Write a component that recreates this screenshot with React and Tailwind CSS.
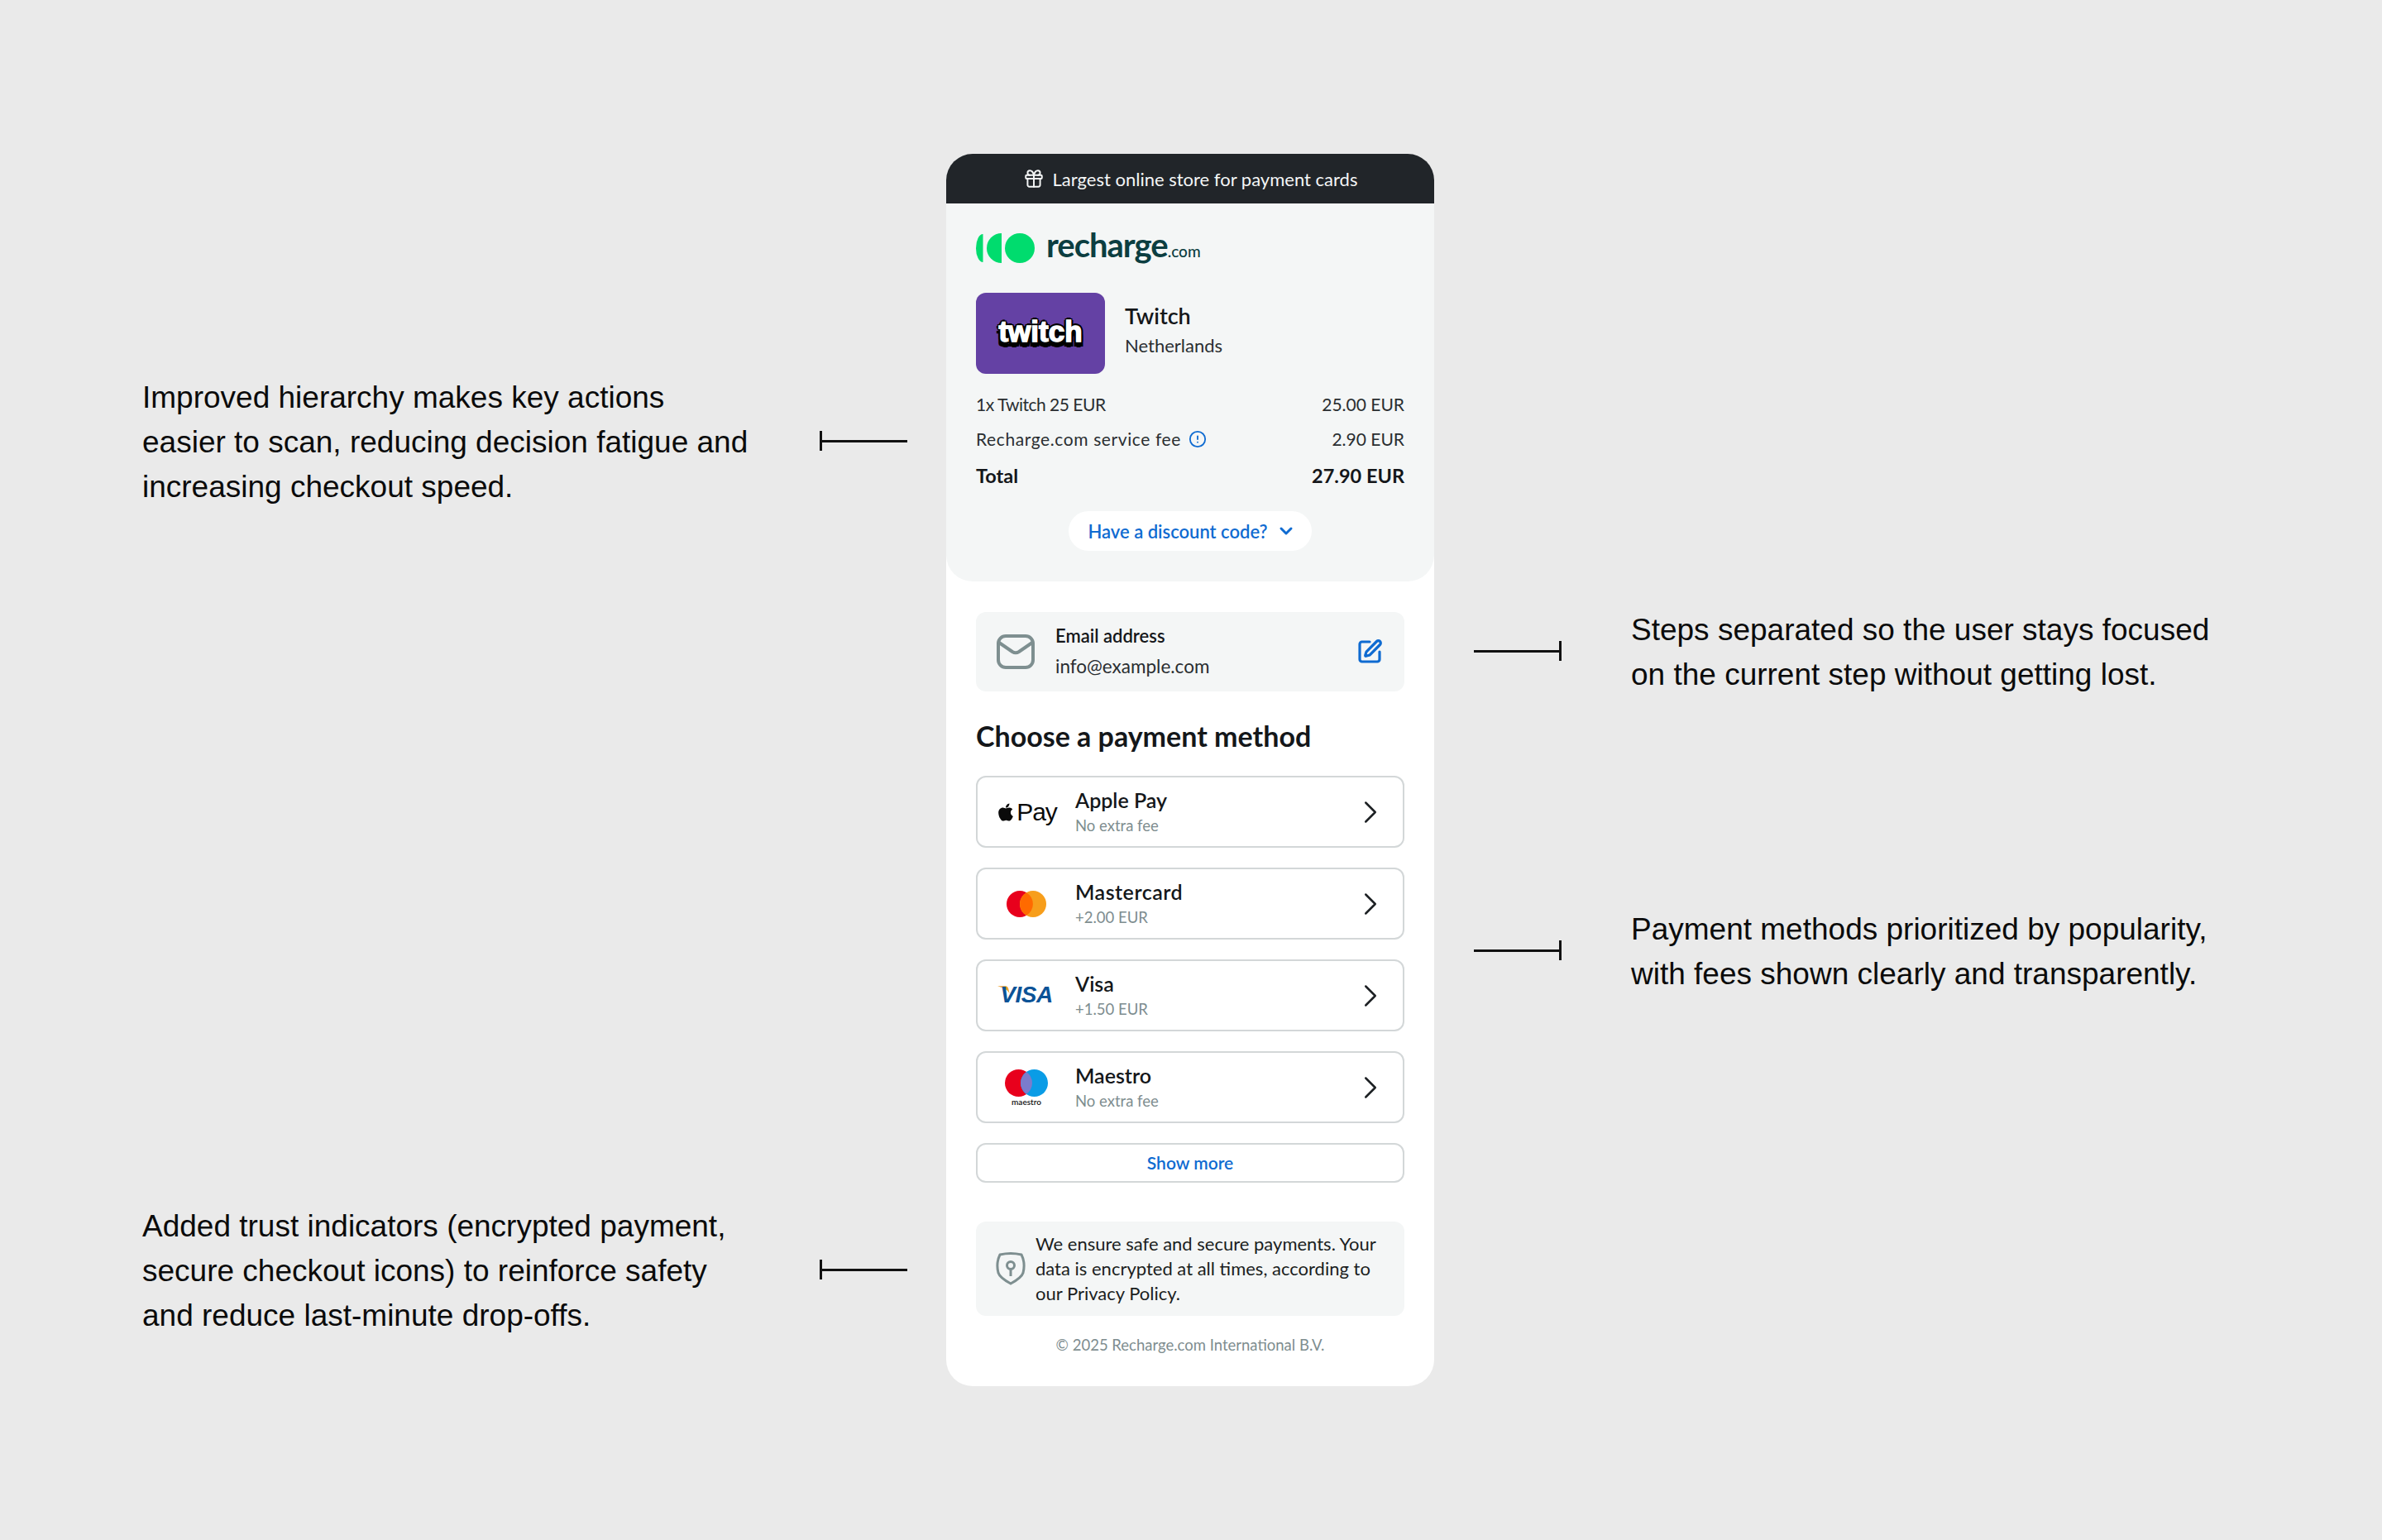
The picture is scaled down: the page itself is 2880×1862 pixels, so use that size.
import React from 'react';
import { Gift, ChevronDown, ChevronRight, CircleAlert, SquarePen } from 'lucide-react';
import { FaApple } from 'react-icons/fa';

function Note({ side, children }) {
  const line = (
    <div className={`flex items-center w-[106px] shrink-0 ${side === 'left' ? 'mb-[4px]' : 'flex-row-reverse mb-[4px]'}`}>
      <div className="w-[3px] h-[24px] bg-[#111]" />
      <div className="flex-1 h-[3px] bg-[#111]" />
    </div>
  );
  const text = <p className="text-[37px] leading-[54px] text-[#0b0b0b] font-['Liberation_Sans',sans-serif] whitespace-pre-line">{children}</p>;
  return side === 'left' ? (
    <div className="flex items-center justify-between">{text}{line}</div>
  ) : (
    <div className="flex items-center gap-[84px]">{line}{text}</div>
  );
}

function LineItem({ label, value, info, tracking }) {
  return (
    <div className="flex justify-between items-center h-[42px] text-[21px] text-[#2a2e31]">
      <span className="flex items-center gap-[9px]">
        <span className={tracking}>{label}</span>
        {info && <CircleAlert size={22} strokeWidth={2} className="text-[#0f6bd1]" />}
      </span>
      <span>{value}</span>
    </div>
  );
}

function Mastercard() {
  return (
    <svg width="48" height="32" viewBox="0 0 48 32">
      <circle cx="16" cy="16" r="16" fill="#e8001c" />
      <circle cx="32" cy="16" r="16" fill="#f79e1b" />
      <path d="M24 2.2a16 16 0 0 1 0 27.6a16 16 0 0 1 0-27.6z" fill="#ff6a00" />
    </svg>
  );
}

function Maestro() {
  return (
    <div className="flex flex-col items-center">
      <svg width="52" height="33" viewBox="0 0 52 33">
        <circle cx="16.5" cy="16.5" r="16.5" fill="#e8001c" />
        <circle cx="35.5" cy="16.5" r="16.5" fill="#0a9ce6" />
        <path d="M26 3a16.5 16.5 0 0 1 0 27a16.5 16.5 0 0 1 0-27z" fill="#7b7ccc" />
      </svg>
      <span className="text-[10px] leading-[9px] mt-[2px] font-semibold text-[#111]">maestro</span>
    </div>
  );
}

function Visa() {
  return (
    <div className="relative">
      <svg className="absolute left-[-3px] top-[3px]" width="16" height="12" viewBox="0 0 22 16">
        <path d="M0 0h14q3 0 4 4l2 8q-4-8-20-12z" fill="#eda02c" />
      </svg>
      <span className="relative text-[28px] leading-none font-bold italic tracking-[-0.5px] text-[#0b5296] font-['Liberation_Sans',sans-serif]">VISA</span>
    </div>
  );
}

function ApplePay() {
  return (
    <div className="flex items-center text-[#0a0a0a]">
      <FaApple size={24} />
      <span className="text-[30px] leading-none font-['Liberation_Sans',sans-serif] ml-[1px] tracking-[-1px]">Pay</span>
    </div>
  );
}

const methods = [
  { name: 'Apple Pay', sub: 'No extra fee', logo: <ApplePay /> },
  { name: 'Mastercard', sub: '+2.00 EUR', logo: <Mastercard />, tracking: 'tracking-[0.5px]' },
  { name: 'Visa', sub: '+1.50 EUR', logo: <Visa /> },
  { name: 'Maestro', sub: 'No extra fee', logo: <Maestro /> },
];

function MethodRow({ method }) {
  return (
    <div className="flex items-center h-[87px] rounded-[12px] border-2 border-[#d3d7d8] bg-white">
      <div className="w-[118px] shrink-0 flex justify-center">{method.logo}</div>
      <div className="flex-1 flex flex-col mb-[2px]">
        <span className={`text-[25px] leading-[32px] font-semibold text-[#14171a] ${method.tracking || ''}`}>{method.name}</span>
        <span className="text-[18.5px] leading-[26px] mt-[2px] text-[#7e8d8f]">{method.sub}</span>
      </div>
      <ChevronRight size={46} strokeWidth={1.3} className="text-[#1d2124] mr-[16px]" />
    </div>
  );
}

export default function App() {
  return (
    <div className="w-[2880px] h-[1862px] bg-[#eaeaea] flex pl-[172px] pt-[186px] font-[Lato,sans-serif]">
      <div className="w-[925px] pt-[268px] flex flex-col gap-[840px]">
        <Note side="left">{'Improved hierarchy makes key actions\neasier to scan, reducing decision fatigue and\nincreasing checkout speed.'}</Note>
        <Note side="left">{'Added trust indicators (encrypted payment,\nsecure checkout icons) to reinforce safety\nand reduce last-minute drop-offs.'}</Note>
      </div>

      <div className="ml-[47px] w-[590px] h-[1490px] rounded-[32px] bg-white overflow-hidden flex flex-col">
        <div className="h-[60px] shrink-0 bg-[#212529] text-[#f4f6f6] flex items-center justify-center gap-[10px] text-[22px]">
          <Gift size={26} strokeWidth={1.8} />
          Largest online store for payment cards
        </div>

        <div className="h-[457px] shrink-0 bg-[#f4f6f6] rounded-b-[32px] px-[36px] pt-[34px]">
          <div className="flex items-center h-[40px]">
            <svg width="71" height="36" viewBox="0 0 71 36" className="shrink-0">
              <path d="M8.5 1a8.5 17 0 0 0 0 34z" fill="#00dc6e" />
              <path d="M31 0a18 18 0 0 0 0 36z" fill="#00dc6e" />
              <circle cx="53" cy="18" r="18" fill="#00dc6e" />
            </svg>
            <span className="ml-[14px] mb-[8px] text-[40px] leading-none font-bold tracking-[-1px] text-[#0c3e41]">recharge<span className="text-[19px] font-medium tracking-normal">.com</span></span>
          </div>

          <div className="flex items-center mt-[34px]">
            <div className="w-[156px] h-[98px] rounded-[12px] bg-[#6441a4] flex items-center justify-center">
              <span className="mb-[6px] text-[35px] leading-none font-bold text-white font-['Liberation_Sans',sans-serif] [-webkit-text-stroke:1.5px_#fff] [text-shadow:3px_0_0_#000,-3px_0_0_#000,0_-3px_0_#000,0_3px_0_#000,2px_2px_0_#000,-2px_2px_0_#000,2px_-2px_0_#000,-2px_-2px_0_#000,3px_6px_0_#000,-3px_6px_0_#000,0_7px_0_#000]">twitch</span>
            </div>
            <div className="ml-[24px] mb-[9px] flex flex-col">
              <span className="text-[27px] leading-[36px] font-semibold text-[#14171a]">Twitch</span>
              <span className="text-[22px] leading-[30px] text-[#2a2e31] mt-[3px]">Netherlands</span>
            </div>
          </div>

          <div className="mt-[16px]">
            <LineItem label="1x Twitch 25 EUR" value="25.00 EUR" tracking="tracking-[-0.5px]" />
            <LineItem label="Recharge.com service fee" value="2.90 EUR" info tracking="tracking-[0.6px]" />
            <div className="flex justify-between items-center h-[44px] mt-[2px] text-[23.5px] font-bold text-[#14171a]">
              <span>Total</span>
              <span>27.90 EUR</span>
            </div>
          </div>

          <div className="flex justify-center mt-[20px]">
            <div className="h-[48px] w-[294px] rounded-full bg-white flex items-center justify-center gap-[10px] pl-[4px] text-[22px] font-semibold text-[#0f6bd1]">
              Have a discount code?
              <ChevronDown size={24} strokeWidth={3} />
            </div>
          </div>
        </div>

        <div className="flex-1 px-[36px] pt-[37px] flex flex-col">
          <div className="h-[96px] rounded-[12px] bg-[#f4f6f6] flex items-center pl-[24px] pr-[26px]">
            <svg width="48" height="44" viewBox="0 0 48 44" fill="none" stroke="#7e8f90" strokeWidth="4" className="shrink-0">
              <rect x="3" y="3" width="42" height="38" rx="9" />
              <path d="M4 11l16 11q4 2.5 8 0l16-11" strokeLinecap="round" />
            </svg>
            <div className="flex-1 ml-[24px] flex flex-col">
              <span className="text-[22px] leading-[30px] font-semibold text-[#14171a]">Email address</span>
              <span className="text-[22.5px] leading-[34px] text-[#2a2e31] mt-[5px]">info@example.com</span>
            </div>
            <SquarePen size={32} strokeWidth={2.4} className="text-[#0f6bd1]" />
          </div>

          <h2 className="mt-[32px] text-[34px] leading-[44px] font-bold text-[#14171a]">Choose a payment method</h2>

          <div className="mt-[26px] flex flex-col gap-[24px]">
            {methods.map((m) => <MethodRow key={m.name} method={m} />)}
            <div className="h-[48px] rounded-[12px] border-2 border-[#d3d7d8] flex items-center justify-center text-[21px] font-semibold text-[#0f6bd1]">Show more</div>
          </div>

          <div className="mt-[47px] h-[114px] rounded-[12px] bg-[#f4f6f6] flex items-center pl-[24px] pr-[20px]">
            <svg width="36" height="42" viewBox="0 0 36 42" fill="none" stroke="#7e8f90" strokeWidth="3" className="shrink-0">
              <path d="M5 4q13-3 26 0q5 10 2 22q-2 6-15 13q-13-7-15-13q-3-12 2-22z" />
              <circle cx="18" cy="17" r="4.5" />
              <path d="M18 22v8" />
            </svg>
            <p className="ml-[12px] text-[22px] leading-[30px] text-[#1b1e21]">We ensure safe and secure payments. Your data is encrypted at all times, according to our Privacy Policy.</p>
          </div>

          <p className="mt-[20px] text-center text-[18.5px] leading-[30px] text-[#7e8d8f]">© 2025 Recharge.com International B.V.</p>
        </div>
      </div>

      <div className="ml-[48px] pt-[549px] flex flex-col gap-[254px]">
        <Note side="right">{'Steps separated so the user stays focused\non the current step without getting lost.'}</Note>
        <Note side="right">{'Payment methods prioritized by popularity,\nwith fees shown clearly and transparently.'}</Note>
      </div>
    </div>
  );
}
